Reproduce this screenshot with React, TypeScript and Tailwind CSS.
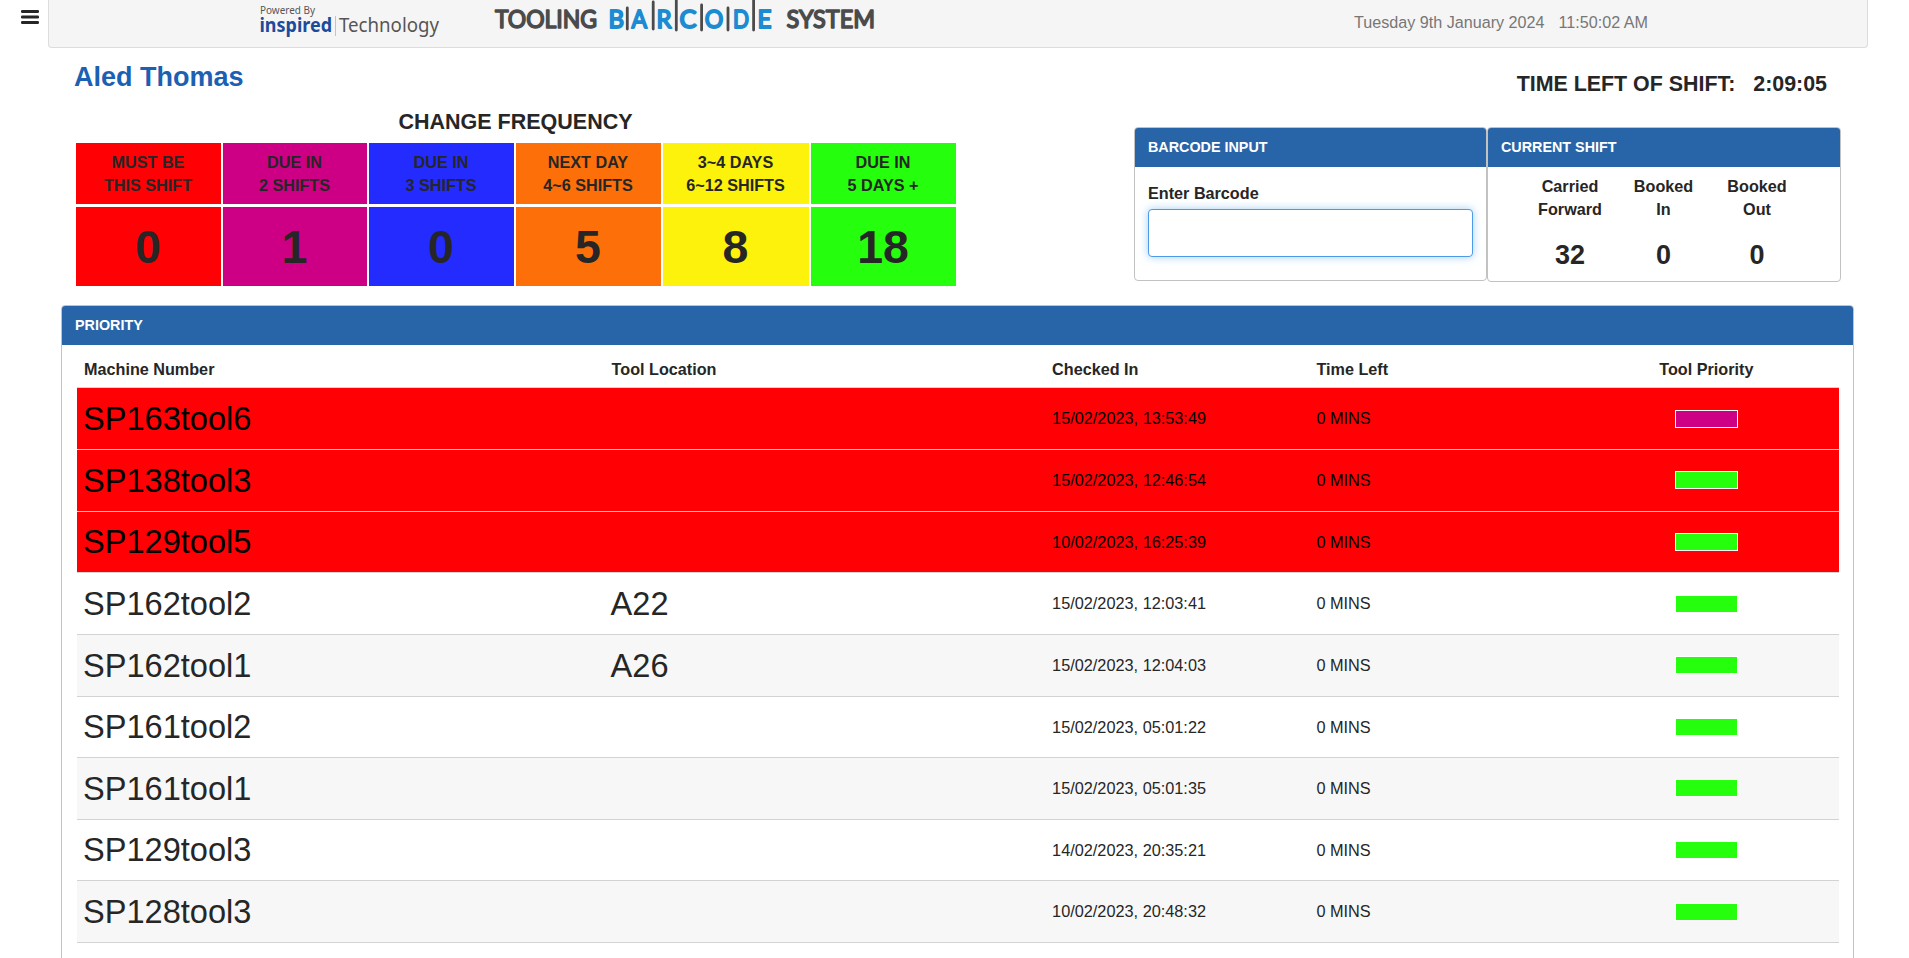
import React from "react";

const frequencies = [
  { top: "MUST BE", bottom: "THIS SHIFT", count: 0, color: "bg-[#ff0004]" },
  { top: "DUE IN", bottom: "2 SHIFTS", count: 1, color: "bg-[#cd0085]" },
  { top: "DUE IN", bottom: "3 SHIFTS", count: 0, color: "bg-[#232bff]" },
  { top: "NEXT DAY", bottom: "4~6 SHIFTS", count: 5, color: "bg-[#fd6f09]" },
  { top: "3~4 DAYS", bottom: "6~12 SHIFTS", count: 8, color: "bg-[#fcf20c]" },
  { top: "DUE IN", bottom: "5 DAYS +", count: 18, color: "bg-[#25ff0e]" },
];

const PINK = "bg-[#cd0085]";
const GREEN = "bg-[#25ff0e]";
const RED_ROW = "bg-[#ff0004] text-black";
const WHITE_ROW = "bg-white";
const GREY_ROW = "bg-[#f7f7f7]";

const tools = [
  { name: "SP163tool6", location: "", checked: "15/02/2023, 13:53:49", row: RED_ROW, pill: PINK, h: "h-[62px]", pad: "" },
  { name: "SP138tool3", location: "", checked: "15/02/2023, 12:46:54", row: RED_ROW, pill: GREEN, h: "h-[62px]", pad: "pb-px" },
  { name: "SP129tool5", location: "", checked: "10/02/2023, 16:25:39", row: RED_ROW, pill: GREEN, h: "h-[61px]", pad: "" },
  { name: "SP162tool2", location: "A22", checked: "15/02/2023, 12:03:41", row: WHITE_ROW, pill: GREEN, h: "h-[62px]", pad: "" },
  { name: "SP162tool1", location: "A26", checked: "15/02/2023, 12:04:03", row: GREY_ROW, pill: GREEN, h: "h-[62px]", pad: "pb-px" },
  { name: "SP161tool2", location: "", checked: "15/02/2023, 05:01:22", row: WHITE_ROW, pill: GREEN, h: "h-[61px]", pad: "" },
  { name: "SP161tool1", location: "", checked: "15/02/2023, 05:01:35", row: GREY_ROW, pill: GREEN, h: "h-[62px]", pad: "pb-px" },
  { name: "SP129tool3", location: "", checked: "14/02/2023, 20:35:21", row: WHITE_ROW, pill: GREEN, h: "h-[61px]", pad: "" },
  { name: "SP128tool3", location: "", checked: "10/02/2023, 20:48:32", row: GREY_ROW, pill: GREEN, h: "h-[62px]", pad: "" },
];

const shiftStats = [
  { top: "Carried", bottom: "Forward", value: 32 },
  { top: "Booked", bottom: "In", value: 0 },
  { top: "Booked", bottom: "Out", value: 0 },
];

const barcodeLetters = [
  { ch: "B", x: 609.5, w: 14 },
  { ch: "A", x: 632.5, w: 14 },
  { ch: "R", x: 657.5, w: 13.5 },
  { ch: "C", x: 680.5, w: 15.5 },
  { ch: "O", x: 705.8, w: 17 },
  { ch: "D", x: 734, w: 14.5 },
  { ch: "E", x: 758.5, w: 12.5 },
];

const bars = [
  { x: 627.3, y1: 8, y2: 29 },
  { x: 653.2, y1: 2, y2: 29 },
  { x: 676.3, y1: -2, y2: 30 },
  { x: 701.6, y1: 5, y2: 30 },
  { x: 728, y1: 8, y2: 30 },
  { x: 753.6, y1: -2, y2: 30 },
];

const COLS = "grid grid-cols-[30%_25%_15%_15%_15%]";

function PanelHeader({ children }: { children: React.ReactNode }) {
  return (
    <div className="flex h-[39px] shrink-0 items-center bg-[#2865a8] pl-[13px] text-[14.35px] font-bold text-white">
      {children}
    </div>
  );
}

function InspiredLogo() {
  return (
    <svg width="182" height="38" viewBox="259 0 182 38" fontFamily="'Noto Sans', 'Open Sans', sans-serif">
      <text x="260" y="14" fontSize="10.3" fill="#555" textLength="55" lengthAdjust="spacingAndGlyphs">Powered By</text>
      <text x="259.5" y="32" fontSize="19" fontWeight="700" fill="#1d4b9b" textLength="72.5" lengthAdjust="spacingAndGlyphs">inspired</text>
      <line x1="335.5" x2="335.5" y1="16" y2="36" stroke="#c4c4c4" />
      <text x="339" y="32" fontSize="19.5" fill="#555" textLength="100" lengthAdjust="spacingAndGlyphs">Technology</text>
    </svg>
  );
}

function BarcodeLogo() {
  return (
    <svg
      width="384"
      height="36"
      viewBox="493 0 384 36"
      fontFamily="Lato, sans-serif"
      fontSize="24.5"
      strokeLinejoin="round"
      strokeLinecap="round"
    >
      <g fill="#4b4b4b" stroke="#4b4b4b" strokeWidth="1.6">
        <text x="495" y="28.2" textLength="102" lengthAdjust="spacingAndGlyphs">TOOLING</text>
        <text x="786.5" y="28.2" textLength="88.5" lengthAdjust="spacingAndGlyphs">SYSTEM</text>
      </g>
      <g fill="#1b8bd2" stroke="#1b8bd2" strokeWidth="1.9">
        {barcodeLetters.map((l) => (
          <text key={l.ch} x={l.x - 1} y="28.2" textLength={l.w + 1.5} lengthAdjust="spacingAndGlyphs">{l.ch}</text>
        ))}
      </g>
      {bars.map((b) => (
        <line key={b.x} x1={b.x} x2={b.x} y1={b.y1} y2={b.y2} stroke="#4b4b4b" strokeWidth="2.8" />
      ))}
    </svg>
  );
}

export default function App() {
  return (
    <div className="flex h-[958px] w-[1909px] flex-col overflow-hidden bg-white font-['Liberation_Sans',Arial,sans-serif] text-[#262626]">
      <header className="flex h-12 shrink-0">
        <button aria-label="Menu" className="flex h-[34px] w-12 items-center pl-[21px]">
          <svg width="18" height="14" viewBox="0 0 18 14" fill="#262626">
            <rect width="18" height="3" rx="1.2" />
            <rect y="5.6" width="18" height="2.8" rx="1.2" />
            <rect y="11" width="18" height="3" rx="1.2" />
          </svg>
        </button>
        <div className="flex w-[1820px] items-start rounded-b border-x border-b border-[#dcdcdc] bg-[#f5f5f5] pl-[210px]">
          <InspiredLogo />
          <div className="pl-[52px]">
            <BarcodeLogo />
          </div>
          <div className="flex gap-3.5 pt-[11px] pl-[477px] text-[16.15px] leading-[23px] whitespace-nowrap text-[#777]">
            <span>Tuesday 9th January 2024</span>
            <span>11:50:02 AM</span>
          </div>
        </div>
      </header>

      <section className="flex h-[257px] shrink-0 justify-between pr-[68px] pl-[74px]">
        <div>
          <h1 className="pt-[13px] text-[27px] leading-8 font-bold text-[#1b60b3]">Aled Thomas</h1>
          <div className="ml-0.5 w-[880px]">
            <h2 className="pt-[17px] pr-px text-center text-[21.5px] leading-6 font-bold">CHANGE FREQUENCY</h2>
            <div className="grid grid-cols-[145px_144px_145px_145px_146px_145px] gap-x-0.5 pt-[9px]">
              {frequencies.map((f) => (
                <div key={f.bottom} className="flex flex-col gap-[3px] text-center font-bold">
                  <div className={`h-[61px] pt-2 pr-px text-[16.2px] leading-[23px] ${f.color}`}>
                    <div>{f.top}</div>
                    <div>{f.bottom}</div>
                  </div>
                  <div className={`flex h-[79px] items-center justify-center pt-px pr-px text-[46.5px] leading-none ${f.color}`}>
                    {f.count}
                  </div>
                </div>
              ))}
            </div>
          </div>
        </div>

        <div className="flex w-[707px] flex-col">
          <div className="flex justify-end gap-[18px] pt-6 pr-3.5 text-[21.4px] leading-6 font-bold">
            <span>TIME LEFT OF SHIFT:</span>
            <span>2:09:05</span>
          </div>
          <div className="flex items-start pt-[31px]">
            <div className="h-[154px] w-[353px] overflow-hidden rounded border border-[#c2c2c2]">
              <PanelHeader>BARCODE INPUT</PanelHeader>
              <label className="block px-[13px] pt-[15px] text-[16.2px] leading-[23px] font-bold">
                <span className="block">Enter Barcode</span>
                <input
                  className="mt-1 block h-12 w-[325px] rounded border border-[#4b9be8] bg-white px-3 shadow-[0_0_8px_rgba(102,175,233,0.6)] outline-none"
                  type="text"
                />
              </label>
            </div>
            <div className="h-[155px] w-[354px] overflow-hidden rounded border border-[#c2c2c2]">
              <PanelHeader>CURRENT SHIFT</PanelHeader>
              <div className="grid grid-cols-[94px_93px_94px] pt-2 pl-[35px] text-center font-bold">
                {shiftStats.map((s) => (
                  <div key={s.bottom} className="text-[16.2px] leading-[23px]">
                    <div>{s.top}</div>
                    <div>{s.bottom}</div>
                    <div className="pt-[18px] text-[27px] leading-8">{s.value}</div>
                  </div>
                ))}
              </div>
            </div>
          </div>
        </div>
      </section>

      <section className="mr-[55px] ml-[61px] h-[700px] shrink-0 overflow-hidden rounded-t border border-[#c2c2c2]">
        <PanelHeader>PRIORITY</PanelHeader>
        <div className="mr-3.5 ml-[15px]">
          <div className={`${COLS} h-[42px] items-center pt-1.5 text-[16.2px] font-bold`}>
            <div className="pl-[7px]">Machine Number</div>
            <div className="pl-1.5">Tool Location</div>
            <div className="pl-1.5">Checked In</div>
            <div className="pl-1.5">Time Left</div>
            <div className="pr-px text-center">Tool Priority</div>
          </div>
          {tools.map((t) => (
            <div key={t.name} className={`${COLS} ${t.h} ${t.row} items-center border-t border-[#d3d3d3] text-[16.3px]`}>
              <div className="pl-1.5 text-[32.6px] leading-9">{t.name}</div>
              <div className="pl-[5px] text-[32.6px] leading-9">{t.location}</div>
              <div className="pl-1.5">{t.checked}</div>
              <div className="pl-1.5">0 MINS</div>
              <div className={`flex justify-center ${t.pad}`}>
                <div className={`h-[18px] w-[63px] border border-white ${t.pill}`} />
              </div>
            </div>
          ))}
          <div className="border-t border-[#d3d3d3]" />
        </div>
      </section>
    </div>
  );
}
